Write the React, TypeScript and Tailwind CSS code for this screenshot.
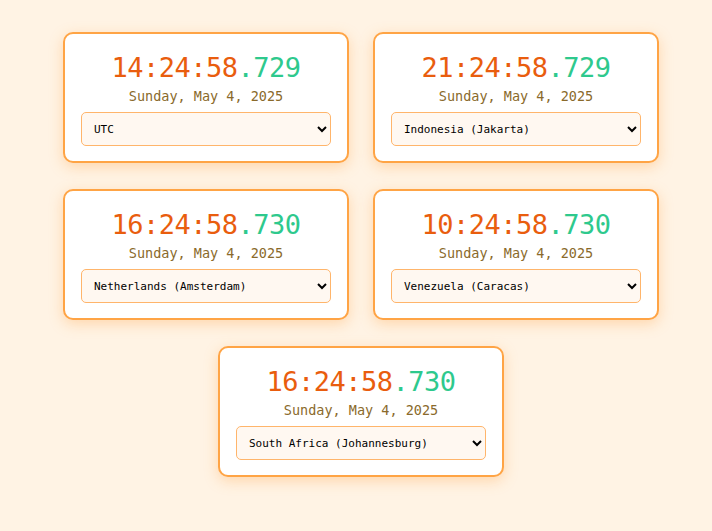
const clocks = [
  { time: "14:24:58", ms: "729", zone: "UTC" },
  { time: "21:24:58", ms: "729", zone: "Indonesia (Jakarta)" },
  { time: "16:24:58", ms: "730", zone: "Netherlands (Amsterdam)" },
  { time: "10:24:58", ms: "730", zone: "Venezuela (Caracas)" },
  { time: "16:24:58", ms: "730", zone: "South Africa (Johannesburg)" },
];

const zones = [
  "UTC",
  "Indonesia (Jakarta)",
  "Netherlands (Amsterdam)",
  "Venezuela (Caracas)",
  "South Africa (Johannesburg)",
];

function Clock({ time, ms, zone }: { time: string; ms: string; zone: string }) {
  return (
    <div className="w-[286px] h-[131px] rounded-[10px] border-2 border-[#ffa445] bg-white shadow-[0_4px_14px_rgba(255,164,69,0.35)] flex flex-col items-center pt-[17px] px-[16px]">
      <div className="text-[27px] leading-[34px] tracking-[-0.5px]">
        <span className="text-[#e95d0e]">{time}</span>
        <span className="text-[#2ec98d]">.{ms}</span>
      </div>
      <div className="text-[13.5px] leading-[18px] text-[#8a6a2b] mt-[2px]">Sunday, May 4, 2025</div>
      <select
        defaultValue={zone}
        className="mt-[7px] w-full h-[34px] rounded-[5px] border border-[#ffb56b] bg-[#fff8f1] px-[8px] text-[11px] text-black font-['DejaVu_Sans_Mono',monospace]"
      >
        {zones.map((z) => (
          <option key={z}>{z}</option>
        ))}
      </select>
    </div>
  );
}

export default function App() {
  return (
    <div className="min-h-[531px] bg-[#fff3e4] font-['DejaVu_Sans_Mono',monospace] pt-[32px] pl-[10px]">
      <div className="flex flex-wrap justify-center gap-x-[24px] gap-y-[26px] w-[620px] mx-auto">
        {clocks.map((c, i) => (
          <Clock key={i} {...c} />
        ))}
      </div>
    </div>
  );
}
